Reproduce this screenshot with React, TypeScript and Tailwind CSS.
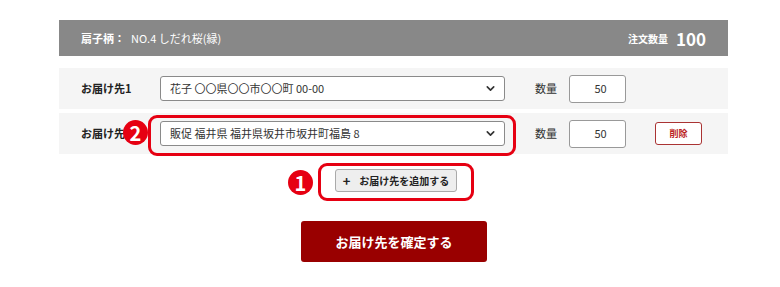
import React from "react";

function Chevron() {
  return (
    <svg width="11" height="11" viewBox="0 0 12 12" className="shrink-0">
      <path d="M2.5 4.2 L6 7.7 L9.5 4.2" fill="none" stroke="#333" strokeWidth="1.8" strokeLinecap="round" strokeLinejoin="round" />
    </svg>
  );
}

function Badge({ n }: { n: string }) {
  return (
    <div className="w-[25px] h-[25px] rounded-full bg-[#e60012] text-white flex items-center justify-center text-[20px] font-bold leading-none">
      {n}
    </div>
  );
}

function AddressRow({ label, address, showDelete }: { label: string; address: string; showDelete?: boolean }) {
  return (
    <div className="flex items-center bg-[#f5f5f5] pl-[22px] h-[41px]">
      <div className="w-[79px] text-[11px] font-bold text-[#222]">{label}</div>
      <div className="w-[345px] h-[25px] bg-white border border-[#8a8a8a] rounded-[3px] flex items-center justify-between pl-[9px] pr-[8px]">
        <span className="text-[11px] text-[#333]">{address}</span>
        <Chevron />
      </div>
      <div className="ml-[30px] w-[34px] text-[11px] text-[#333]">数量</div>
      <div className="w-[57px] h-[28px] bg-white border border-[#999] rounded-[3px] flex items-center justify-center text-[11px] text-[#333] pl-[6px]">
        50
      </div>
      {showDelete && (
        <div className="ml-[29px] w-[47px] h-[23px] border border-[#a33] rounded-[3px] bg-white flex items-center justify-center text-[9px] font-bold text-[#b22]">
          削除
        </div>
      )}
    </div>
  );
}

export default function App() {
  return (
    <div className="w-[780px] h-[287px] bg-white font-['Noto_Sans_CJK_JP','Noto_Sans',sans-serif] relative overflow-hidden">
      <div className="ml-[59px] w-[669px] pt-[20px]">
        {/* header */}
        <div className="h-[36px] bg-[#888888] flex items-center justify-between pl-[22px] pr-[22px] text-white">
          <div className="text-[11px]">
            <span className="font-bold">扇子柄：</span>
            <span className="ml-[6px]">NO.4 しだれ桜(緑)</span>
          </div>
          <div className="flex items-center">
            <span className="text-[10px] font-bold">注文数量</span>
            <span className="ml-[8px] text-[17px] font-bold leading-none">100</span>
          </div>
        </div>

        {/* rows */}
        <div className="mt-[12px] flex flex-col gap-[4px]">
          <AddressRow label="お届け先1" address="花子 〇〇県〇〇市〇〇町 00-00" />
          <AddressRow label="お届け先2" address="販促 福井県 福井県坂井市坂井町福島 8" showDelete />
        </div>

        {/* add button */}
        <div className="flex mt-[15px] pl-[276px]">
          <div className="w-[122px] h-[23px] shrink-0 bg-[#eeeeee] border border-[#aaa] rounded-[3px] flex items-center justify-center gap-[9px] text-[10px] font-bold text-[#222] whitespace-nowrap">
            <span className="text-[13px] font-bold leading-none">+</span>
            <span>お届け先を追加する</span>
          </div>
        </div>

        {/* confirm */}
        <div className="flex mt-[29px] pl-[242px]">
          <div className="w-[186px] h-[41px] shrink-0 bg-[#990000] rounded-[3px] flex items-center justify-center text-white text-[13px] font-bold">
            お届け先を確定する
          </div>
        </div>
      </div>

      {/* annotations */}
      <div className="absolute left-[148px] top-[115px] w-[368px] h-[41px] border-[3px] border-[#e60012] rounded-[9px]" />
      <div className="absolute left-[123px] top-[120px]">
        <Badge n="2" />
      </div>
      <div className="absolute left-[318px] top-[163px] w-[156px] h-[38px] border-[3px] border-[#e60012] rounded-[9px]" />
      <div className="absolute left-[288px] top-[170px]">
        <Badge n="1" />
      </div>
    </div>
  );
}
